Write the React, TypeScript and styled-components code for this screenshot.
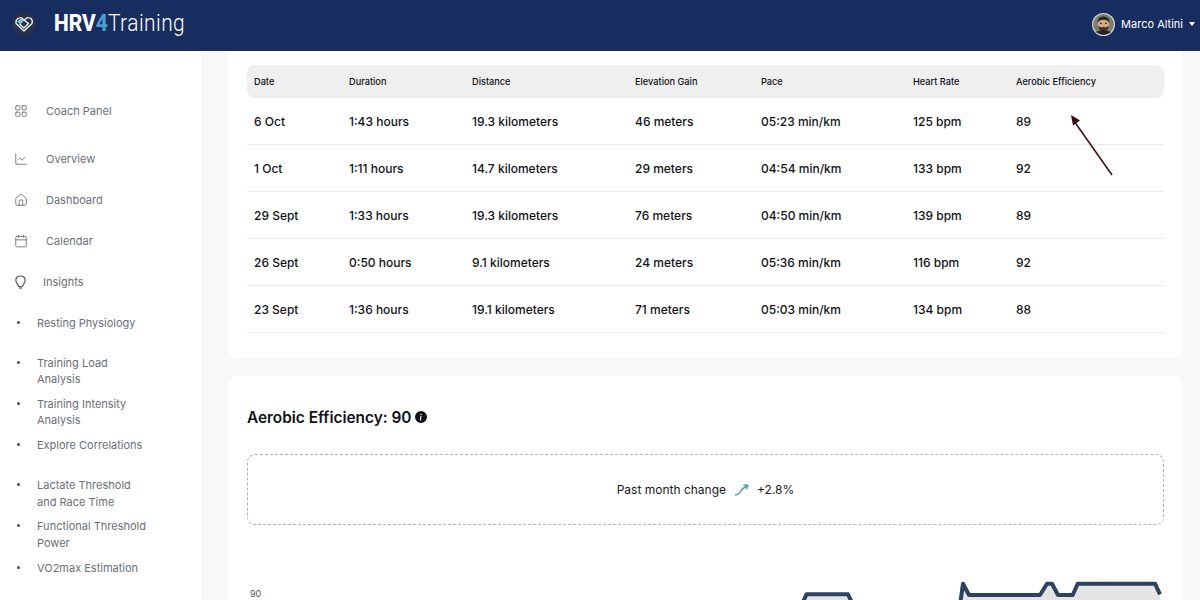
import React from 'react';
import styled, {createGlobalStyle} from 'styled-components';
import {Calendar, ChartLine, House, LayoutGrid} from 'lucide-react';
import {BsInfoCircleFill} from 'react-icons/bs';

const GlobalStyle = createGlobalStyle`
  html, body {
    margin: 0;
    height: 100%;
    overflow: hidden;
    background: #ffffff;
    font-family: Inter, "Liberation Sans", sans-serif;
  }
`;

const Page = styled.div`
  width: 1200px;
  height: 600px;
  overflow: hidden;
  position: relative;
  display: flex;
  flex-direction: column;
`;

const Header = styled.header`
  height: 51px;
  flex: none;
  background-color: #182d5f;
  display: flex;
  align-items: center;
  justify-content: space-between;
  padding: 0 5px 3px 11px;
  box-sizing: border-box;
`;

const Brand = styled.div`
  display: flex;
  align-items: center;
  gap: 17px;
`;

const BrandName = styled.div`
  font-family: Roboto, sans-serif;
  font-size: 23px;
  line-height: 28px;
  color: #ffffff;
  font-weight: 300;
  letter-spacing: 0.5px;
  transform: scaleX(0.91);
  transform-origin: left center;
`;

const BrandBold = styled.span<{$blue?: boolean}>`
  font-weight: 800;
  letter-spacing: 0;
  color: ${p => (p.$blue ? '#4d9bd6' : '#ffffff')};
`;

const User = styled.div`
  display: flex;
  align-items: center;
  gap: 6px;
  color: #ffffff;
  font-size: 11px;
  font-weight: 400;
`;

const Caret = styled.span`
  width: 0;
  height: 0;
  border-left: 3.5px solid transparent;
  border-right: 3.5px solid transparent;
  border-top: 4px solid #ffffff;
`;

const Body = styled.div`
  flex: 1;
  display: flex;
  min-height: 0;
`;

const Sidebar = styled.aside`
  width: 201px;
  flex: none;
  background: #ffffff;
  padding-top: 39px;
  box-sizing: border-box;
`;

const NavItem = styled.div<{$gap: number; $spaced?: boolean}>`
  height: 41px;
  display: flex;
  align-items: center;
  gap: ${p => p.$gap}px;
  padding-left: 14px;
  margin-bottom: ${p => (p.$spaced ? 7 : 0)}px;
  color: #6b7075;
  font-size: 11px;
  line-height: 16px;
  svg {
    flex: none;
    color: #555a60;
  }
`;

const SubList = styled.div`
  display: flex;
  flex-direction: column;
  padding: 13px 0 0 17px;
`;

const SubItem = styled.div<{$top: number}>`
  display: flex;
  gap: 17px;
  margin-top: ${p => p.$top}px;
  color: #6b7075;
  font-size: 11px;
  line-height: 16.5px;
  width: 132px;
`;

const Dot = styled.span`
  width: 3px;
  height: 3px;
  flex: none;
  margin-top: 6px;
  border-radius: 50%;
  background: #4a4f55;
`;

const Main = styled.main`
  flex: 1;
  background: #f8f8f8;
  padding: 0 18px 0 27px;
  min-width: 0;
  overflow: hidden;
`;

const Card = styled.section<{$first?: boolean}>`
  background: #ffffff;
  border-radius: ${p => (p.$first ? '0 0 8px 8px' : '8px')};
  padding: ${p => (p.$first ? '14px 18px 25px 19px' : '32px 18px 0 19px')};
  margin-bottom: 18px;
`;

const Table = styled.table`
  width: 917px;
  border-collapse: collapse;
  table-layout: fixed;
  color: #101216;
`;

const HeadCell = styled.th<{$width?: number}>`
  box-sizing: border-box;
  height: 33px;
  padding: 0 0 0 7px;
  width: ${p => (p.$width ? `${p.$width}px` : 'auto')};
  background: #efefef;
  text-align: left;
  font-size: 9.2px;
  font-weight: 500;
  &:first-child {
    border-radius: 8px 0 0 8px;
  }
  &:last-child {
    border-radius: 0 8px 8px 0;
  }
`;

const Row = styled.tr`
  border-bottom: 1px solid #ebebeb;
`;

const Cell = styled.td`
  height: 46px;
  padding: 0 0 0 7px;
  font-size: 12px;
  font-weight: 500;
`;

const Title = styled.h2`
  display: flex;
  align-items: center;
  gap: 4px;
  margin: 0;
  height: 18px;
  font-size: 15.4px;
  font-weight: 600;
  color: #101216;
`;

const ChangeBox = styled.div`
  height: 71px;
  margin-top: 28px;
  box-sizing: border-box;
  border: 1px dashed #b4b4b4;
  border-radius: 8px;
  display: flex;
  align-items: center;
  justify-content: center;
  gap: 8px;
  font-size: 12px;
  color: #17191d;
`;

const Chart = styled.div`
  margin: 52px 0 0 -19px;
  display: flex;
`;

const Arrow = styled.svg`
  position: absolute;
  left: 1065px;
  top: 110px;
`;

const columns = [95, 123, 163, 126, 152, 103];
const headings = ['Date', 'Duration', 'Distance', 'Elevation Gain', 'Pace', 'Heart Rate', 'Aerobic Efficiency'];
const activities = [
  ['6 Oct', '1:43 hours', '19.3 kilometers', '46 meters', '05:23 min/km', '125 bpm', '89'],
  ['1 Oct', '1:11 hours', '14.7 kilometers', '29 meters', '04:54 min/km', '133 bpm', '92'],
  ['29 Sept', '1:33 hours', '19.3 kilometers', '76 meters', '04:50 min/km', '139 bpm', '89'],
  ['26 Sept', '0:50 hours', '9.1 kilometers', '24 meters', '05:36 min/km', '116 bpm', '92'],
  ['23 Sept', '1:36 hours', '19.1 kilometers', '71 meters', '05:03 min/km', '134 bpm', '88']
];

const subNav = [
  {top: 0, label: 'Resting Physiology'},
  {top: 23, label: 'Training Load Analysis'},
  {top: 8, label: 'Training Intensity Analysis'},
  {top: 8, label: 'Explore Correlations'},
  {top: 24, label: 'Lactate Threshold and Race Time'},
  {top: 8, label: 'Functional Threshold Power'},
  {top: 9, label: 'VO2max Estimation'}
];

const Logo = () => (
  <svg width="26" height="26" viewBox="0 0 26 26" fill="none">
    <circle cx="13" cy="13" r="12" fill="#26334f" />
    <path d="M6 10.5 L10 7.5 L13 9.5 L9.5 13.5 Z" fill="#7fc0e8" />
    <path
      d="M13 20 L5 12.5 Q4.5 9 7 7.5 L10 6.5 L13 9 L16.5 6.5 L20 7.5 Q22 9.5 21 12.5 Z M8.5 13 L13 17 L17.5 12.5 L13 9"
      stroke="#ffffff"
      strokeWidth="1.2"
      strokeLinejoin="round"
    />
  </svg>
);

const Avatar = () => (
  <svg width="23" height="23" viewBox="0 0 23 23">
    <circle cx="11.5" cy="11.5" r="11.5" fill="#d4d6da" />
    <circle cx="11.5" cy="11.5" r="10.4" fill="#7d7f6c" />
    <ellipse cx="11.5" cy="11.5" rx="5.8" ry="6.6" fill="#d6a985" />
    <path d="M5.6 10 Q5.2 3.4 11.5 3.4 Q17.8 3.4 17.4 10 Q15.5 6.6 11.5 6.8 Q7.5 6.6 5.6 10 Z" fill="#2b2420" />
    <path d="M6 13 Q7.5 14.6 11.5 14 Q15.5 14.6 17 13 Q16.5 18.4 11.5 18.4 Q6.5 18.4 6 13 Z" fill="#40332a" />
    <path d="M3.8 19 Q11.5 15.5 19.2 19 Q15 21.9 11.5 21.9 Q8 21.9 3.8 19 Z" fill="#23242a" />
    <rect x="8" y="9.8" width="2" height="1" fill="#2b2420" />
    <rect x="13" y="9.8" width="2" height="1" fill="#2b2420" />
  </svg>
);

const Bulb = () => (
  <svg width="13" height="14" viewBox="0 0 13 14" fill="none" stroke="currentColor" strokeWidth="1.2" strokeLinejoin="round">
    <path d="M6.5 1 C3.5 1 1.8 3 1.8 5.2 C1.8 7.6 3.8 8.6 4.4 11.5 H8.6 C9.2 8.6 11.2 7.6 11.2 5.2 C11.2 3 9.5 1 6.5 1 Z" />
    <path d="M5 13 H8" />
  </svg>
);

const Trend = () => (
  <svg width="15" height="12" viewBox="0 0 15 12" fill="none" stroke="#4f9d90" strokeWidth="1.4">
    <path d="M1 11 C4 11 5 10 6.5 7.5 C8 5 9.5 3.5 13 2" />
    <path d="M9.5 1 L13.8 1.4 L12.6 5.4" />
  </svg>
);

const AerobicChart = () => (
  <svg width="935" height="60" viewBox="0 0 935 60">
    <text x="22" y="20" fontSize="9" fill="#555a60" fontFamily="Inter, sans-serif">90</text>
    <path d="M573.5 28 L578.5 17.3 L620 17.3 L625 28 Z" fill="#e4e4e4" />
    <path
      d="M732 28 L735 6.7 L741 18 L812 18 L819 6.7 L824 6.7 L830 18 L844.7 18 L849.7 6.7 L927 6.7 L932 17.3 L932 28 Z"
      fill="#e4e4e4"
    />
    <g fill="none" stroke="#2c4260" strokeWidth="4" strokeLinejoin="round">
      <path d="M573.5 28 L578.5 17.3 L620 17.3 L625 28" />
      <path d="M732 28 L735 6.7 L741 18 L812 18 L819 6.7 L824 6.7 L830 18 L844.7 18 L849.7 6.7 L927 6.7 L932 17.3" />
    </g>
  </svg>
);

export default function App() {
  return (
    <Page>
      <GlobalStyle />
      <Header>
        <Brand>
          <Logo />
          <BrandName>
            <BrandBold>HRV</BrandBold>
            <BrandBold $blue>4</BrandBold>
            Training
          </BrandName>
        </Brand>
        <User>
          <Avatar />
          Marco Altini
          <Caret />
        </User>
      </Header>
      <Body>
        <Sidebar>
          <NavItem $gap={18} $spaced>
            <LayoutGrid size={14} strokeWidth={1.3} />
            Coach Panel
          </NavItem>
          <NavItem $gap={18}>
            <ChartLine size={14} strokeWidth={1.3} />
            Overview
          </NavItem>
          <NavItem $gap={18}>
            <House size={14} strokeWidth={1.3} />
            Dashboard
          </NavItem>
          <NavItem $gap={18}>
            <Calendar size={14} strokeWidth={1.3} />
            Calendar
          </NavItem>
          <NavItem $gap={16}>
            <Bulb />
            Insights
          </NavItem>
          <SubList>
            {subNav.map(item => (
              <SubItem key={item.label} $top={item.top}>
                <Dot />
                <span>{item.label}</span>
              </SubItem>
            ))}
          </SubList>
        </Sidebar>
        <Main>
          <Card $first>
            <Table>
              <thead>
                <tr>
                  {headings.map((heading, i) => (
                    <HeadCell key={heading} $width={columns[i]}>
                      {heading}
                    </HeadCell>
                  ))}
                </tr>
              </thead>
              <tbody>
                {activities.map(row => (
                  <Row key={row[0]}>
                    {row.map((value, i) => (
                      <Cell key={i}>{value}</Cell>
                    ))}
                  </Row>
                ))}
              </tbody>
            </Table>
          </Card>
          <Card>
            <Title>
              Aerobic Efficiency: 90
              <BsInfoCircleFill size={12} />
            </Title>
            <ChangeBox>
              Past month change
              <Trend />
              +2.8%
            </ChangeBox>
            <Chart>
              <AerobicChart />
            </Chart>
          </Card>
        </Main>
      </Body>
      <Arrow width="54" height="70" viewBox="0 0 54 70" fill="none">
        <path d="M47 65 L9 11" stroke="#3a0d12" strokeWidth="1.5" />
        <path d="M6 5 L15 10.5 L8 15.5 Z" fill="#3a0d12" />
      </Arrow>
    </Page>
  );
}
